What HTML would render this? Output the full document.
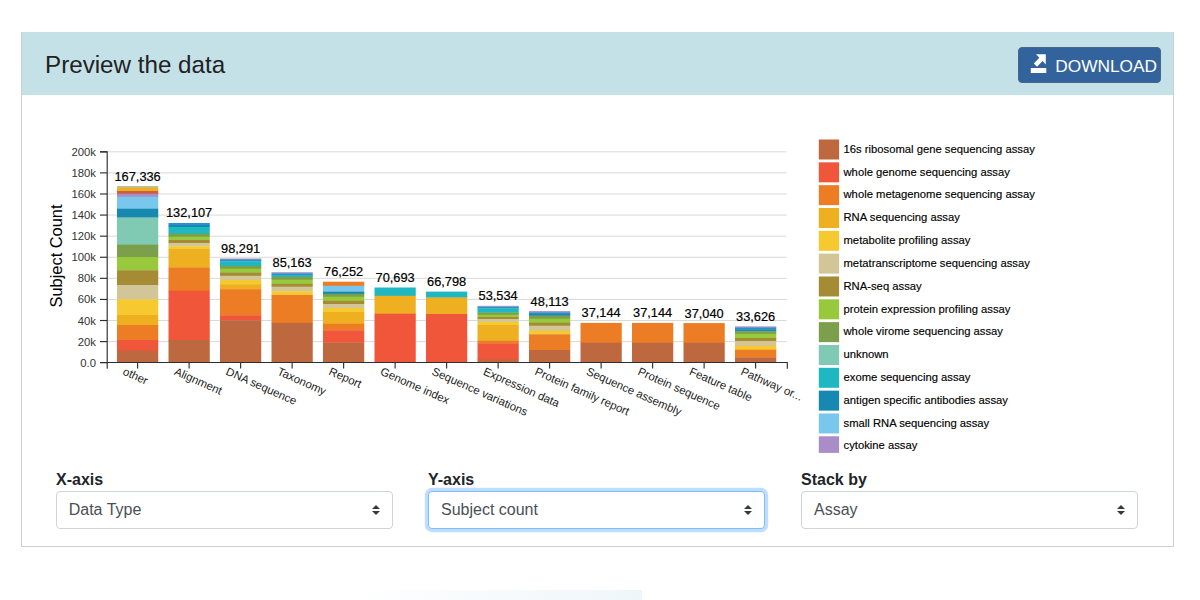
<!DOCTYPE html>
<html lang="en"><head><meta charset="utf-8"><title>Preview the data</title>
<style>
html,body{margin:0;padding:0;background:#fff;}
body{width:1200px;height:600px;position:relative;overflow:hidden;font-family:"Liberation Sans",Arial,sans-serif;}
.panel{position:absolute;left:21px;top:32px;width:1151px;height:513px;border:1px solid #cfcfcf;background:#fff;box-sizing:content-box;}
.hdr{position:absolute;left:22px;top:32px;width:1151px;height:62.6px;background:#c5e1e8;}
.hdr h2{position:absolute;left:23px;top:19px;margin:0;font-weight:400;font-size:24.2px;line-height:28px;color:#222;white-space:nowrap;}
.btn{position:absolute;left:1018px;top:47px;width:141px;height:34px;border:1px solid #4b6584;border-radius:4px;background:#33639c;color:#fff;font-size:17.3px;}
.btn span{position:absolute;left:36.3px;top:8px;line-height:20px;white-space:nowrap;}
.btn svg{position:absolute;left:11px;top:6px;}
.chart{position:absolute;left:0;top:0;}
.lbl{position:absolute;top:470px;font-weight:700;font-size:16px;line-height:20px;color:#212529;}
.sel{position:absolute;top:491px;height:36px;width:323.3px;border:1px solid #ced4da;border-radius:4px;background:#fff;color:#495057;font-size:16px;line-height:36px;padding-left:12px;box-sizing:content-box;}
.sel.f{border-color:#80bdff;box-shadow:0 0 0 3.2px rgba(0,123,255,.25);}
.sel svg{position:absolute;right:12px;top:13px;}
.blob{position:absolute;left:360px;top:590px;width:282px;height:14px;background:linear-gradient(90deg,rgba(244,249,252,0) 0%,#f6fafc 50%,#eff6fa 100%);}
</style></head><body>
<div class="panel"></div>
<div class="hdr"><h2>Preview the data</h2></div>
<div class="btn"><svg width="18" height="20" viewBox="0 0 18 20"><path d="M0.8,13.9h15.5v5h-15.5z M6,0.2H15.8V10.5L12.6,7.1L7,12.7L3.8,9.5L9.4,3.7z" fill="#fff"/></svg><span>DOWNLOAD</span></div>
<svg class="chart" width="1200" height="600" viewBox="0 0 1200 600" font-family="'Liberation Sans', Arial, sans-serif">
<line x1="108" x2="786.5" y1="341.61" y2="341.61" stroke="#d9d9d9" stroke-width="1"/>
<line x1="108" x2="786.5" y1="320.52" y2="320.52" stroke="#d9d9d9" stroke-width="1"/>
<line x1="108" x2="786.5" y1="299.43" y2="299.43" stroke="#d9d9d9" stroke-width="1"/>
<line x1="108" x2="786.5" y1="278.34" y2="278.34" stroke="#d9d9d9" stroke-width="1"/>
<line x1="108" x2="786.5" y1="257.25" y2="257.25" stroke="#d9d9d9" stroke-width="1"/>
<line x1="108" x2="786.5" y1="236.16" y2="236.16" stroke="#d9d9d9" stroke-width="1"/>
<line x1="108" x2="786.5" y1="215.07" y2="215.07" stroke="#d9d9d9" stroke-width="1"/>
<line x1="108" x2="786.5" y1="193.98" y2="193.98" stroke="#d9d9d9" stroke-width="1"/>
<line x1="108" x2="786.5" y1="172.89" y2="172.89" stroke="#d9d9d9" stroke-width="1"/>
<line x1="108" x2="786.5" y1="151.80" y2="151.80" stroke="#d9d9d9" stroke-width="1"/>
<rect x="117.00" y="186.10" width="41.25" height="1.70" fill="#a9bd98"/>
<rect x="117.00" y="187.50" width="41.25" height="3.80" fill="#eeb021"/>
<rect x="117.00" y="191.00" width="41.25" height="3.00" fill="#cc5f3c"/>
<rect x="117.00" y="193.70" width="41.25" height="3.30" fill="#aa8cc9"/>
<rect x="117.00" y="196.70" width="41.25" height="12.30" fill="#79c7ed"/>
<rect x="117.00" y="208.70" width="41.25" height="9.10" fill="#1788b0"/>
<rect x="117.00" y="217.50" width="41.25" height="27.50" fill="#80c9b2"/>
<rect x="117.00" y="244.70" width="41.25" height="12.60" fill="#7c9f4b"/>
<rect x="117.00" y="257.00" width="41.25" height="13.60" fill="#98c93c"/>
<rect x="117.00" y="270.30" width="41.25" height="15.00" fill="#a48b34"/>
<rect x="117.00" y="285.00" width="41.25" height="14.60" fill="#d2c699"/>
<rect x="117.00" y="299.30" width="41.25" height="16.00" fill="#f5c92f"/>
<rect x="117.00" y="315.00" width="41.25" height="10.30" fill="#eeb021"/>
<rect x="117.00" y="325.00" width="41.25" height="15.30" fill="#ec7d25"/>
<rect x="117.00" y="340.00" width="41.25" height="11.00" fill="#f0563a"/>
<rect x="117.00" y="350.70" width="41.25" height="11.60" fill="#be6840"/>
<text x="137.62" y="180.50" text-anchor="middle" font-size="12.8" fill="#000" stroke="#000" stroke-width="0.2">167,336</text>
<rect x="168.50" y="223.00" width="41.25" height="2.30" fill="#2b8fce"/>
<rect x="168.50" y="225.00" width="41.25" height="2.30" fill="#1788b0"/>
<rect x="168.50" y="227.00" width="41.25" height="7.00" fill="#1fb8c2"/>
<rect x="168.50" y="233.70" width="41.25" height="3.30" fill="#7c9f4b"/>
<rect x="168.50" y="236.70" width="41.25" height="3.60" fill="#98c93c"/>
<rect x="168.50" y="240.00" width="41.25" height="3.30" fill="#a48b34"/>
<rect x="168.50" y="243.00" width="41.25" height="3.60" fill="#d2c699"/>
<rect x="168.50" y="246.30" width="41.25" height="3.00" fill="#f5c92f"/>
<rect x="168.50" y="249.00" width="41.25" height="18.80" fill="#eeb021"/>
<rect x="168.50" y="267.50" width="41.25" height="23.50" fill="#ec7d25"/>
<rect x="168.50" y="290.70" width="41.25" height="49.60" fill="#f0563a"/>
<rect x="168.50" y="340.00" width="41.25" height="22.30" fill="#be6840"/>
<text x="189.12" y="217.40" text-anchor="middle" font-size="12.8" fill="#000" stroke="#000" stroke-width="0.2">132,107</text>
<rect x="220.00" y="258.30" width="41.25" height="1.20" fill="#e9a3b5"/>
<rect x="220.00" y="259.20" width="41.25" height="2.40" fill="#2b8fce"/>
<rect x="220.00" y="261.30" width="41.25" height="4.80" fill="#1fb8c2"/>
<rect x="220.00" y="265.80" width="41.25" height="3.20" fill="#7c9f4b"/>
<rect x="220.00" y="268.70" width="41.25" height="4.10" fill="#98c93c"/>
<rect x="220.00" y="272.50" width="41.25" height="3.60" fill="#a48b34"/>
<rect x="220.00" y="275.80" width="41.25" height="4.50" fill="#d2c699"/>
<rect x="220.00" y="280.00" width="41.25" height="4.50" fill="#f5c92f"/>
<rect x="220.00" y="284.20" width="41.25" height="5.30" fill="#eeb021"/>
<rect x="220.00" y="289.20" width="41.25" height="26.40" fill="#ec7d25"/>
<rect x="220.00" y="315.30" width="41.25" height="5.30" fill="#f0563a"/>
<rect x="220.00" y="320.30" width="41.25" height="42.00" fill="#be6840"/>
<text x="240.62" y="252.70" text-anchor="middle" font-size="12.8" fill="#000" stroke="#000" stroke-width="0.2">98,291</text>
<rect x="271.50" y="272.20" width="41.25" height="1.40" fill="#aa8cc9"/>
<rect x="271.50" y="273.30" width="41.25" height="2.00" fill="#2b8fce"/>
<rect x="271.50" y="275.00" width="41.25" height="2.00" fill="#1fb8c2"/>
<rect x="271.50" y="276.70" width="41.25" height="3.30" fill="#7c9f4b"/>
<rect x="271.50" y="279.70" width="41.25" height="4.40" fill="#98c93c"/>
<rect x="271.50" y="283.80" width="41.25" height="3.20" fill="#a48b34"/>
<rect x="271.50" y="286.70" width="41.25" height="4.90" fill="#d2c699"/>
<rect x="271.50" y="291.30" width="41.25" height="4.00" fill="#f5c92f"/>
<rect x="271.50" y="295.00" width="41.25" height="28.10" fill="#ec7d25"/>
<rect x="271.50" y="322.80" width="41.25" height="39.50" fill="#be6840"/>
<text x="292.12" y="266.60" text-anchor="middle" font-size="12.8" fill="#000" stroke="#000" stroke-width="0.2">85,163</text>
<rect x="323.00" y="281.70" width="41.25" height="4.40" fill="#ec7d25"/>
<rect x="323.00" y="285.80" width="41.25" height="6.20" fill="#79c7ed"/>
<rect x="323.00" y="291.70" width="41.25" height="2.40" fill="#1788b0"/>
<rect x="323.00" y="293.80" width="41.25" height="3.20" fill="#7c9f4b"/>
<rect x="323.00" y="296.70" width="41.25" height="4.40" fill="#98c93c"/>
<rect x="323.00" y="300.80" width="41.25" height="3.70" fill="#a48b34"/>
<rect x="323.00" y="304.20" width="41.25" height="4.10" fill="#d2c699"/>
<rect x="323.00" y="308.00" width="41.25" height="4.30" fill="#f5c92f"/>
<rect x="323.00" y="312.00" width="41.25" height="12.10" fill="#eeb021"/>
<rect x="323.00" y="323.80" width="41.25" height="6.80" fill="#ec7d25"/>
<rect x="323.00" y="330.30" width="41.25" height="12.50" fill="#f0563a"/>
<rect x="323.00" y="342.50" width="41.25" height="19.80" fill="#be6840"/>
<text x="343.62" y="276.10" text-anchor="middle" font-size="12.8" fill="#000" stroke="#000" stroke-width="0.2">76,252</text>
<rect x="374.50" y="287.50" width="41.25" height="8.60" fill="#1fb8c2"/>
<rect x="374.50" y="295.80" width="41.25" height="18.20" fill="#eeb021"/>
<rect x="374.50" y="313.70" width="41.25" height="48.60" fill="#f0563a"/>
<text x="395.12" y="281.90" text-anchor="middle" font-size="12.8" fill="#000" stroke="#000" stroke-width="0.2">70,693</text>
<rect x="426.00" y="291.60" width="41.25" height="6.20" fill="#1fb8c2"/>
<rect x="426.00" y="297.50" width="41.25" height="16.80" fill="#eeb021"/>
<rect x="426.00" y="314.00" width="41.25" height="48.30" fill="#f0563a"/>
<text x="446.62" y="286.00" text-anchor="middle" font-size="12.8" fill="#000" stroke="#000" stroke-width="0.2">66,798</text>
<rect x="477.50" y="305.70" width="41.25" height="1.10" fill="#e9a3b5"/>
<rect x="477.50" y="306.50" width="41.25" height="2.10" fill="#2b8fce"/>
<rect x="477.50" y="308.30" width="41.25" height="4.50" fill="#1fb8c2"/>
<rect x="477.50" y="312.50" width="41.25" height="2.50" fill="#7c9f4b"/>
<rect x="477.50" y="314.70" width="41.25" height="2.60" fill="#98c93c"/>
<rect x="477.50" y="317.00" width="41.25" height="2.50" fill="#a48b34"/>
<rect x="477.50" y="319.20" width="41.25" height="3.10" fill="#d2c699"/>
<rect x="477.50" y="322.00" width="41.25" height="3.30" fill="#f5c92f"/>
<rect x="477.50" y="325.00" width="41.25" height="16.10" fill="#eeb021"/>
<rect x="477.50" y="340.80" width="41.25" height="2.80" fill="#ec7d25"/>
<rect x="477.50" y="343.30" width="41.25" height="16.70" fill="#f0563a"/>
<rect x="477.50" y="359.70" width="41.25" height="2.60" fill="#be6840"/>
<text x="498.12" y="300.10" text-anchor="middle" font-size="12.8" fill="#000" stroke="#000" stroke-width="0.2">53,534</text>
<rect x="529.00" y="311.10" width="41.25" height="1.60" fill="#aa8cc9"/>
<rect x="529.00" y="312.40" width="41.25" height="1.90" fill="#2b8fce"/>
<rect x="529.00" y="314.00" width="41.25" height="1.90" fill="#1788b0"/>
<rect x="529.00" y="315.60" width="41.25" height="3.40" fill="#7c9f4b"/>
<rect x="529.00" y="318.70" width="41.25" height="4.30" fill="#98c93c"/>
<rect x="529.00" y="322.70" width="41.25" height="3.30" fill="#a48b34"/>
<rect x="529.00" y="325.70" width="41.25" height="5.30" fill="#d2c699"/>
<rect x="529.00" y="330.70" width="41.25" height="3.90" fill="#f5c92f"/>
<rect x="529.00" y="334.30" width="41.25" height="16.00" fill="#ec7d25"/>
<rect x="529.00" y="350.00" width="41.25" height="12.30" fill="#be6840"/>
<text x="549.62" y="305.50" text-anchor="middle" font-size="12.8" fill="#000" stroke="#000" stroke-width="0.2">48,113</text>
<rect x="580.50" y="322.90" width="41.25" height="20.10" fill="#ec7d25"/>
<rect x="580.50" y="342.70" width="41.25" height="19.60" fill="#be6840"/>
<text x="601.12" y="317.30" text-anchor="middle" font-size="12.8" fill="#000" stroke="#000" stroke-width="0.2">37,144</text>
<rect x="632.00" y="322.90" width="41.25" height="20.10" fill="#ec7d25"/>
<rect x="632.00" y="342.70" width="41.25" height="19.60" fill="#be6840"/>
<text x="652.62" y="317.30" text-anchor="middle" font-size="12.8" fill="#000" stroke="#000" stroke-width="0.2">37,144</text>
<rect x="683.50" y="323.10" width="41.25" height="20.00" fill="#ec7d25"/>
<rect x="683.50" y="342.80" width="41.25" height="19.50" fill="#be6840"/>
<text x="704.12" y="317.50" text-anchor="middle" font-size="12.8" fill="#000" stroke="#000" stroke-width="0.2">37,040</text>
<rect x="735.00" y="326.40" width="41.25" height="1.40" fill="#aa8cc9"/>
<rect x="735.00" y="327.50" width="41.25" height="2.10" fill="#2b8fce"/>
<rect x="735.00" y="329.30" width="41.25" height="2.20" fill="#1788b0"/>
<rect x="735.00" y="331.20" width="41.25" height="2.90" fill="#7c9f4b"/>
<rect x="735.00" y="333.80" width="41.25" height="4.50" fill="#98c93c"/>
<rect x="735.00" y="338.00" width="41.25" height="3.30" fill="#a48b34"/>
<rect x="735.00" y="341.00" width="41.25" height="5.10" fill="#d2c699"/>
<rect x="735.00" y="345.80" width="41.25" height="4.20" fill="#f5c92f"/>
<rect x="735.00" y="349.70" width="41.25" height="8.10" fill="#ec7d25"/>
<rect x="735.00" y="357.50" width="41.25" height="4.80" fill="#be6840"/>
<text x="755.62" y="320.80" text-anchor="middle" font-size="12.8" fill="#000" stroke="#000" stroke-width="0.2">33,626</text>
<path d="M100,151.8H107.2V368.7" fill="none" stroke="#2e2e2e" stroke-width="1.15"/>
<path d="M100,362.5H787.3V368.7" fill="none" stroke="#2e2e2e" stroke-width="1.15"/>
<line x1="100" x2="107.2" y1="362.70" y2="362.70" stroke="#2e2e2e" stroke-width="1.15"/>
<text x="96" y="366.70" text-anchor="end" font-size="11.3" fill="#333">0.0</text>
<line x1="100" x2="107.2" y1="341.61" y2="341.61" stroke="#2e2e2e" stroke-width="1.15"/>
<text x="96" y="345.61" text-anchor="end" font-size="11.3" fill="#333">20k</text>
<line x1="100" x2="107.2" y1="320.52" y2="320.52" stroke="#2e2e2e" stroke-width="1.15"/>
<text x="96" y="324.52" text-anchor="end" font-size="11.3" fill="#333">40k</text>
<line x1="100" x2="107.2" y1="299.43" y2="299.43" stroke="#2e2e2e" stroke-width="1.15"/>
<text x="96" y="303.43" text-anchor="end" font-size="11.3" fill="#333">60k</text>
<line x1="100" x2="107.2" y1="278.34" y2="278.34" stroke="#2e2e2e" stroke-width="1.15"/>
<text x="96" y="282.34" text-anchor="end" font-size="11.3" fill="#333">80k</text>
<line x1="100" x2="107.2" y1="257.25" y2="257.25" stroke="#2e2e2e" stroke-width="1.15"/>
<text x="96" y="261.25" text-anchor="end" font-size="11.3" fill="#333">100k</text>
<line x1="100" x2="107.2" y1="236.16" y2="236.16" stroke="#2e2e2e" stroke-width="1.15"/>
<text x="96" y="240.16" text-anchor="end" font-size="11.3" fill="#333">120k</text>
<line x1="100" x2="107.2" y1="215.07" y2="215.07" stroke="#2e2e2e" stroke-width="1.15"/>
<text x="96" y="219.07" text-anchor="end" font-size="11.3" fill="#333">140k</text>
<line x1="100" x2="107.2" y1="193.98" y2="193.98" stroke="#2e2e2e" stroke-width="1.15"/>
<text x="96" y="197.98" text-anchor="end" font-size="11.3" fill="#333">160k</text>
<line x1="100" x2="107.2" y1="172.89" y2="172.89" stroke="#2e2e2e" stroke-width="1.15"/>
<text x="96" y="176.89" text-anchor="end" font-size="11.3" fill="#333">180k</text>
<line x1="100" x2="107.2" y1="151.80" y2="151.80" stroke="#2e2e2e" stroke-width="1.15"/>
<text x="96" y="155.80" text-anchor="end" font-size="11.3" fill="#333">200k</text>
<line x1="137.62" x2="137.62" y1="362.5" y2="368.5" stroke="#2e2e2e" stroke-width="1.15"/>
<text transform="translate(122.12,374.20) rotate(24)" font-size="11.4" fill="#222">other</text>
<line x1="189.12" x2="189.12" y1="362.5" y2="368.5" stroke="#2e2e2e" stroke-width="1.15"/>
<text transform="translate(173.62,374.20) rotate(24)" font-size="11.4" fill="#222">Alignment</text>
<line x1="240.62" x2="240.62" y1="362.5" y2="368.5" stroke="#2e2e2e" stroke-width="1.15"/>
<text transform="translate(225.12,374.20) rotate(24)" font-size="11.4" fill="#222">DNA sequence</text>
<line x1="292.12" x2="292.12" y1="362.5" y2="368.5" stroke="#2e2e2e" stroke-width="1.15"/>
<text transform="translate(276.62,374.20) rotate(24)" font-size="11.4" fill="#222">Taxonomy</text>
<line x1="343.62" x2="343.62" y1="362.5" y2="368.5" stroke="#2e2e2e" stroke-width="1.15"/>
<text transform="translate(328.12,374.20) rotate(24)" font-size="11.4" fill="#222">Report</text>
<line x1="395.12" x2="395.12" y1="362.5" y2="368.5" stroke="#2e2e2e" stroke-width="1.15"/>
<text transform="translate(379.62,374.20) rotate(24)" font-size="11.4" fill="#222">Genome index</text>
<line x1="446.62" x2="446.62" y1="362.5" y2="368.5" stroke="#2e2e2e" stroke-width="1.15"/>
<text transform="translate(431.12,374.20) rotate(24)" font-size="11.4" fill="#222">Sequence variations</text>
<line x1="498.12" x2="498.12" y1="362.5" y2="368.5" stroke="#2e2e2e" stroke-width="1.15"/>
<text transform="translate(482.62,374.20) rotate(24)" font-size="11.4" fill="#222">Expression data</text>
<line x1="549.62" x2="549.62" y1="362.5" y2="368.5" stroke="#2e2e2e" stroke-width="1.15"/>
<text transform="translate(534.12,374.20) rotate(24)" font-size="11.4" fill="#222">Protein family report</text>
<line x1="601.12" x2="601.12" y1="362.5" y2="368.5" stroke="#2e2e2e" stroke-width="1.15"/>
<text transform="translate(585.62,374.20) rotate(24)" font-size="11.4" fill="#222">Sequence assembly</text>
<line x1="652.62" x2="652.62" y1="362.5" y2="368.5" stroke="#2e2e2e" stroke-width="1.15"/>
<text transform="translate(637.12,374.20) rotate(24)" font-size="11.4" fill="#222">Protein sequence</text>
<line x1="704.12" x2="704.12" y1="362.5" y2="368.5" stroke="#2e2e2e" stroke-width="1.15"/>
<text transform="translate(688.62,374.20) rotate(24)" font-size="11.4" fill="#222">Feature table</text>
<line x1="755.62" x2="755.62" y1="362.5" y2="368.5" stroke="#2e2e2e" stroke-width="1.15"/>
<text transform="translate(740.12,374.20) rotate(24)" font-size="11.4" fill="#222">Pathway or...</text>
<text transform="translate(61.5,256) rotate(-90)" text-anchor="middle" font-size="16.4" fill="#000">Subject Count</text>
<rect x="818.8" y="139.50" width="20.3" height="20" fill="#be6840"/>
<text x="843.5" y="152.70" font-size="11.25" fill="#000" stroke="#000" stroke-width="0.15">16s ribosomal gene sequencing assay</text>
<rect x="818.8" y="162.33" width="20.3" height="20" fill="#f0563a"/>
<text x="843.5" y="175.53" font-size="11.25" fill="#000" stroke="#000" stroke-width="0.15">whole genome sequencing assay</text>
<rect x="818.8" y="185.16" width="20.3" height="20" fill="#ec7d25"/>
<text x="843.5" y="198.36" font-size="11.25" fill="#000" stroke="#000" stroke-width="0.15">whole metagenome sequencing assay</text>
<rect x="818.8" y="207.99" width="20.3" height="20" fill="#eeb021"/>
<text x="843.5" y="221.19" font-size="11.25" fill="#000" stroke="#000" stroke-width="0.15">RNA sequencing assay</text>
<rect x="818.8" y="230.82" width="20.3" height="20" fill="#f5c92f"/>
<text x="843.5" y="244.02" font-size="11.25" fill="#000" stroke="#000" stroke-width="0.15">metabolite profiling assay</text>
<rect x="818.8" y="253.65" width="20.3" height="20" fill="#d2c699"/>
<text x="843.5" y="266.85" font-size="11.25" fill="#000" stroke="#000" stroke-width="0.15">metatranscriptome sequencing assay</text>
<rect x="818.8" y="276.48" width="20.3" height="20" fill="#a48b34"/>
<text x="843.5" y="289.68" font-size="11.25" fill="#000" stroke="#000" stroke-width="0.15">RNA-seq assay</text>
<rect x="818.8" y="299.31" width="20.3" height="20" fill="#98c93c"/>
<text x="843.5" y="312.51" font-size="11.25" fill="#000" stroke="#000" stroke-width="0.15">protein expression profiling assay</text>
<rect x="818.8" y="322.14" width="20.3" height="20" fill="#7c9f4b"/>
<text x="843.5" y="335.34" font-size="11.25" fill="#000" stroke="#000" stroke-width="0.15">whole virome sequencing assay</text>
<rect x="818.8" y="344.97" width="20.3" height="20" fill="#80c9b2"/>
<text x="843.5" y="358.17" font-size="11.25" fill="#000" stroke="#000" stroke-width="0.15">unknown</text>
<rect x="818.8" y="367.80" width="20.3" height="20" fill="#1fb8c2"/>
<text x="843.5" y="381.00" font-size="11.25" fill="#000" stroke="#000" stroke-width="0.15">exome sequencing assay</text>
<rect x="818.8" y="390.63" width="20.3" height="20" fill="#1788b0"/>
<text x="843.5" y="403.83" font-size="11.25" fill="#000" stroke="#000" stroke-width="0.15">antigen specific antibodies assay</text>
<rect x="818.8" y="413.46" width="20.3" height="20" fill="#79c7ed"/>
<text x="843.5" y="426.66" font-size="11.25" fill="#000" stroke="#000" stroke-width="0.15">small RNA sequencing assay</text>
<rect x="818.8" y="436.29" width="20.3" height="16.6" fill="#aa8cc9"/>
<text x="843.5" y="449.49" font-size="11.25" fill="#000" stroke="#000" stroke-width="0.15">cytokine assay</text>
</svg>
<div class="lbl" style="left:56px">X-axis</div>
<div class="lbl" style="left:428px">Y-axis</div>
<div class="lbl" style="left:801px">Stack by</div>
<div class="sel" style="left:55.7px">Data Type<svg width="8" height="10" viewBox="0 0 4 5"><path fill="#343a40" d="M2 0L0 2h4zm0 5L0 3h4z"/></svg></div>
<div class="sel f" style="left:428px">Subject count<svg width="8" height="10" viewBox="0 0 4 5"><path fill="#343a40" d="M2 0L0 2h4zm0 5L0 3h4z"/></svg></div>
<div class="sel" style="left:801px">Assay<svg width="8" height="10" viewBox="0 0 4 5"><path fill="#343a40" d="M2 0L0 2h4zm0 5L0 3h4z"/></svg></div>
<div class="blob"></div>
</body></html>
